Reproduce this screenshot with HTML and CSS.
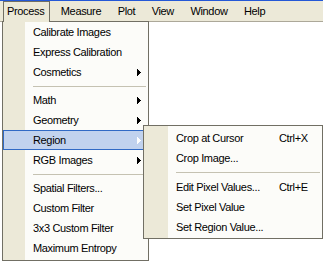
FILE: index.html
```html
<!DOCTYPE html>
<html>
<head>
<meta charset="utf-8">
<link rel="stylesheet" href="styles.css">
</head>
<body>
<div class="topline"></div>
<div class="menubar">
  <div class="mb-item open">Process</div>
  <div class="mb-item">Measure</div>
  <div class="mb-item">Plot</div>
  <div class="mb-item">View</div>
  <div class="mb-item">Window</div>
  <div class="mb-item">Help</div>
</div>

<div class="menu main">
  <div class="row">Calibrate Images</div>
  <div class="row">Express Calibration</div>
  <div class="row sub-row">Cosmetics<svg class="arrow" width="4" height="7" viewBox="0 0 4 7"><path d="M0 0h1v7h-1z M1 1h1v5h-1z M2 2h1v3h-1z M3 3h1v1h-1z"/></svg></div>
  <div class="sep"></div>
  <div class="row sub-row">Math<svg class="arrow" width="4" height="7" viewBox="0 0 4 7"><path d="M0 0h1v7h-1z M1 1h1v5h-1z M2 2h1v3h-1z M3 3h1v1h-1z"/></svg></div>
  <div class="row sub-row">Geometry<svg class="arrow" width="4" height="7" viewBox="0 0 4 7"><path d="M0 0h1v7h-1z M1 1h1v5h-1z M2 2h1v3h-1z M3 3h1v1h-1z"/></svg></div>
  <div class="row sub-row hl">Region<svg class="arrow" width="4" height="7" viewBox="0 0 4 7"><path d="M0 0h1v7h-1z M1 1h1v5h-1z M2 2h1v3h-1z M3 3h1v1h-1z"/></svg></div>
  <div class="row sub-row">RGB Images<svg class="arrow" width="4" height="7" viewBox="0 0 4 7"><path d="M0 0h1v7h-1z M1 1h1v5h-1z M2 2h1v3h-1z M3 3h1v1h-1z"/></svg></div>
  <div class="sep"></div>
  <div class="row">Spatial Filters...</div>
  <div class="row">Custom Filter</div>
  <div class="row">3x3 Custom Filter</div>
  <div class="row">Maximum Entropy</div>
</div>

<div class="menu submenu">
  <div class="row"><span class="label">Crop at Cursor</span><span class="key">Ctrl+X</span></div>
  <div class="row"><span class="label">Crop Image...</span></div>
  <div class="sep"></div>
  <div class="row"><span class="label">Edit Pixel Values...</span><span class="key">Ctrl+E</span></div>
  <div class="row"><span class="label">Set Pixel Value</span></div>
  <div class="row"><span class="label">Set Region Value...</span></div>
</div>
</body>
</html>
```

FILE: styles.css
```css
html, body {
  margin: 0;
  padding: 0;
  background: #ffffff;
  width: 323px;
  height: 261px;
  overflow: hidden;
}

body {
  font-family: "Liberation Sans", Arial, sans-serif;
  font-size: 11px;
  letter-spacing: -0.35px;
  color: #000000;
  position: relative;
}

.topline {
  height: 1px;
  background: #2458d6;
}

.menubar {
  height: 20px;
  background: #ece9d8;
  border-bottom: 1px solid #aca899;
  display: flex;
  align-items: stretch;
  gap: 6.5px;
  padding-left: 3px;
}

.mb-item {
  border: 1px solid transparent;
  border-bottom: none;
  padding: 0 5px 0 3px;
  line-height: 19px;
}

.mb-item.open {
  border-color: #716f64;
  position: relative;
  z-index: 3;
  height: 21px;
  box-sizing: border-box;
  background: #ece9d8;
  height: 21px;
}

.menu {
  position: absolute;
  box-sizing: border-box;
  border: 1px solid #716f64;
}

.main {
  left: 2px;
  top: 21px;
  width: 147px;
  padding-bottom: 2px;
  background: linear-gradient(to right, #ece9d8 0 22px, #fcfcf9 22px);
  z-index: 1;
}

.submenu {
  left: 143px;
  top: 125px;
  width: 180px;
  padding: 2px 0 1px;
  background: linear-gradient(to right, #ece9d8 0 24px, #fcfcf9 24px);
  z-index: 2;
}

.row {
  height: 20px;
  box-sizing: border-box;
  display: flex;
  align-items: center;
  padding-left: 30px;
  position: relative;
  white-space: nowrap;
}

.submenu .row {
  padding-left: 32px;
}

.row.hl {
  background: #c1d2ee;
  border: 1px solid #316ac5;
  padding-left: 29px;
}

.arrow {
  position: absolute;
  right: 7px;
  top: 7px;
  fill: #000000;
  shape-rendering: crispEdges;
}

.row.hl .arrow {
  fill: #ffffff;
  right: 6px;
  top: 6px;
}

.label {
  width: 103px;
  flex: none;
}

.sep {
  height: 8px;
  position: relative;
}

.sep::after {
  content: "";
  position: absolute;
  left: 30px;
  right: 2px;
  top: 4px;
  height: 1px;
  background: #c5c2b2;
}

.submenu .sep {
  height: 9px;
}

.submenu .sep::after {
  left: 32px;
  top: 4px;
}
```
